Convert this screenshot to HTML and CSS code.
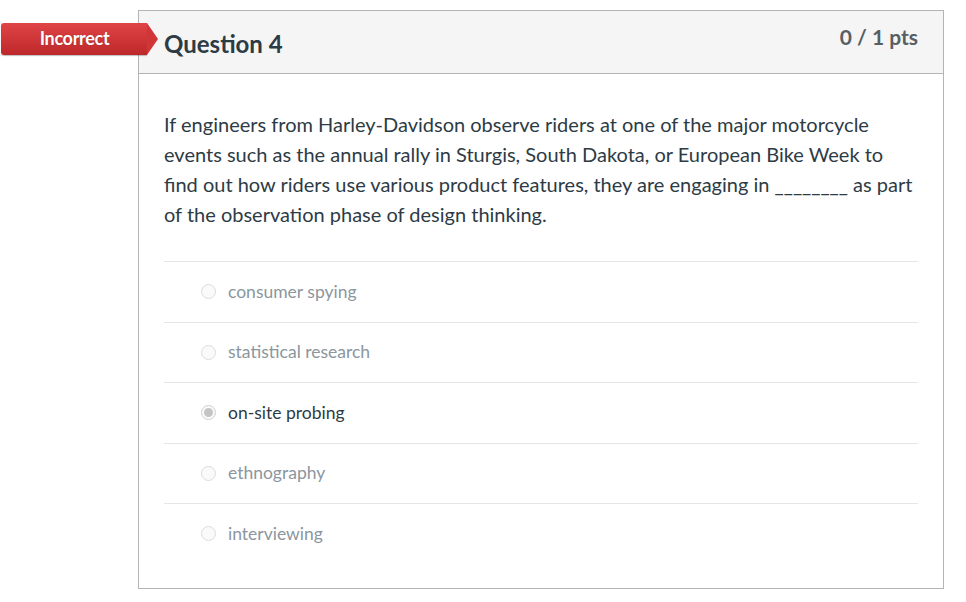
FILE: index.html
```html
<!DOCTYPE html>
<html>
<head>
<meta charset="utf-8">
<link rel="stylesheet" href="styles.css">
</head>
<body>
<div class="page">
  <div class="card">
    <div class="badge"><span class="badge-text">Incorrect</span></div>
    <div class="header">
      <div class="title">Question 4</div>
      <div class="pts">0 / 1 pts</div>
    </div>
    <div class="body">
      <p class="question">If engineers from Harley-Davidson observe riders at one of the major motorcycle events such as the annual rally in Sturgis, South Dakota, or European Bike Week to find out how riders use various product features, they are engaging in ________ as part of the observation phase of design thinking.</p>
      <div class="answers">
        <div class="answer"><span class="radio"></span><span class="label">consumer spying</span></div>
        <div class="answer"><span class="radio"></span><span class="label">statistical research</span></div>
        <div class="answer selected"><span class="radio"></span><span class="label">on-site probing</span></div>
        <div class="answer"><span class="radio"></span><span class="label">ethnography</span></div>
        <div class="answer"><span class="radio"></span><span class="label">interviewing</span></div>
      </div>
    </div>
  </div>
</div>
</body>
</html>
```

FILE: styles.css
```css
html, body {
  margin: 0;
  padding: 0;
  background: #fff;
  font-family: Lato, "Open Sans", sans-serif;
  color: #2d3b45;
}

.page {
  padding-top: 10px;
  padding-left: 138px;
}

.card {
  position: relative;
  width: 804px;
  height: 577px;
  border: 1px solid #b4b4b4;
  box-sizing: content-box;
}

.badge {
  position: absolute;
  left: -138px;
  top: 12px;
  width: 146px;
  height: 32px;
  background: linear-gradient(#e04446, #bd282a);
  border-radius: 3px 0 0 3px;
  box-shadow: 0 1px 1px rgba(0,0,0,0.25);
  display: flex;
  align-items: center;
  justify-content: center;
}

.badge::after {
  content: "";
  position: absolute;
  right: -11px;
  top: 0;
  width: 0;
  height: 0;
  border-top: 16px solid transparent;
  border-bottom: 16px solid transparent;
  border-left: 11px solid #d03537;
}

.badge-text {
  color: #fff;
  font-weight: 700;
  font-size: 18px;
  letter-spacing: -0.3px;
  margin-left: 1px;
  margin-top: -2px;
  text-shadow: 0 0 1px rgba(0,0,0,0.3);
}

.header {
  height: 62px;
  background: #f5f5f5;
  border-bottom: 1px solid #b4b4b4;
  display: flex;
  justify-content: space-between;
  padding: 0 25px 0 25px;
}

.title {
  font-size: 24px;
  font-weight: 700;
  color: #2d3b45;
  padding-top: 20px;
  line-height: 26px;
}

.pts {
  font-size: 21px;
  font-weight: 700;
  color: #575f65;
  padding-top: 14px;
  line-height: 24px;
}

.body {
  padding: 35px 25px 0 25px;
}

.question {
  margin: 0;
  font-size: 20px;
  line-height: 30px;
  color: #2d3b45;
}

.answers {
  margin-top: 32px;
}

.answer {
  height: 59.5px;
  border-top: 1px solid #e6e6e6;
  display: flex;
  align-items: center;
  padding-left: 37px;
  font-size: 17.5px;
  color: #8b969e;
}

.answer.selected {
  color: #2d3b45;
}

.radio {
  width: 13px;
  height: 13px;
  border-radius: 50%;
  border: 1px solid #dcdcdc;
  background: #fafafa;
  margin-right: 12px;
  box-sizing: content-box;
  position: relative;
}

.answer.selected .radio {
  border-color: #cfcfcf;
}

.answer.selected .radio::after {
  content: "";
  position: absolute;
  left: 2px;
  top: 2px;
  width: 9px;
  height: 9px;
  border-radius: 50%;
  background: #c4c4c4;
}

.label {
  line-height: 20px;
}
```
